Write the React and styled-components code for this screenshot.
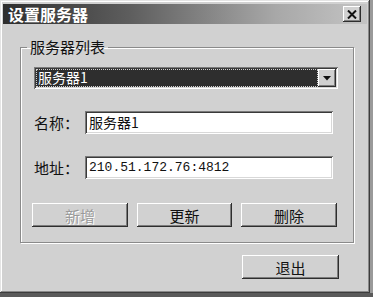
import React from 'react';
import styled, { createGlobalStyle } from 'styled-components';

const GlobalStyle = createGlobalStyle`
  html, body {
    margin: 0;
    padding: 0;
    background: #5a5a5a;
  }
  body {
    font-family: "Noto Sans CJK SC", "Liberation Sans", sans-serif;
  }
`;

const Window = styled.div`
  width: 370px;
  height: 293px;
  box-sizing: border-box;
  padding: 3px;
  background: #d1d1d1;
  box-shadow: inset -1px -1px #3c3c3c, inset 1px 1px #e4e4e4,
    inset -2px -2px #8a8a8a, inset 2px 2px #ffffff, 3px 0 #9a9a9a;
`;

const TitleBar = styled.div`
  height: 20px;
  margin-top: 1px;
  display: flex;
  align-items: center;
  justify-content: space-between;
  padding: 0 5px 0 5px;
  background: linear-gradient(90deg, #2e2e2e 0%, #5e5e5e 35%, #a8a8a8 75%, #c4c4c4 100%);
`;

const Title = styled.span`
  color: #fff;
  font-weight: bold;
  font-size: 16px;
  line-height: 20px;
`;

const CloseButton = styled.div`
  width: 18px;
  height: 16px;
  box-sizing: border-box;
  background: #d1d1d1;
  box-shadow: inset -1px -1px #2e2e2e, inset 1px 1px #ffffff, inset -2px -2px #808080;
  display: flex;
  align-items: center;
  justify-content: center;
  margin-right: 1px;
  svg { display: block; }
`;

const Group = styled.fieldset`
  margin: 13px 0 0 17px;
  width: 334px;
  height: 206px;
  box-sizing: border-box;
  padding: 10px 0 0 13px;
  border: 1px solid #8a8a8a;
  box-shadow: 1px 1px #fff, inset 1px 1px #fff;
  display: flex;
  flex-direction: column;
`;

const Legend = styled.legend`
  font-size: 15px;
  line-height: 20px;
  padding: 0 3px;
  margin-left: -7px;
  color: #111;
`;

const Sunken = styled.div`
  box-sizing: border-box;
  padding: 2px;
  box-shadow: inset 1px 1px #7a7a7a, inset -1px -1px #ffffff,
    inset 2px 2px #3a3a3a, inset -2px -2px #d8d8d8;
`;

const Combo = styled(Sunken)`
  width: 304px;
  height: 22px;
  display: flex;
  background: #fff;
`;

const ComboValue = styled.div`
  flex: 1;
  background: #2e2e2e;
  color: #fff;
  font-size: 14px;
  line-height: 16px;
  padding-left: 2px;
  outline: 1px dotted #d0d0d0;
  outline-offset: -1px;
`;

const ArrowButton = styled.div`
  width: 18px;
  background: #d1d1d1;
  box-shadow: inset -1px -1px #2e2e2e, inset 1px 1px #ffffff, inset -2px -2px #808080;
  display: flex;
  align-items: center;
  justify-content: center;
`;

const Row = styled.div`
  display: flex;
  align-items: center;
  margin-top: ${p => p.$gap}px;
`;

const Label = styled.div`
  width: 51px;
  font-size: 15px;
  color: #111;
`;

const TextInput = styled(Sunken)`
  width: 248px;
  height: 23px;
  background: #fff;
  color: #111;
  font-size: ${p => (p.$mono ? 13 : 14)}px;
  font-family: ${p => (p.$mono ? '"Liberation Mono", "DejaVu Sans Mono", monospace' : '"Noto Sans CJK SC", sans-serif')};
  line-height: 19px;
  padding-left: 4px;
`;

const ButtonRow = styled.div`
  display: flex;
  gap: 9px;
  margin: 24px 0 0 -2px;
`;

const Button = styled.div`
  width: ${p => p.$w || 96}px;
  height: 24px;
  box-sizing: border-box;
  background: #d1d1d1;
  box-shadow: inset -1px -1px #2e2e2e, inset 1px 1px #ffffff, inset -2px -2px #7c7c7c;
  display: flex;
  align-items: center;
  justify-content: center;
  font-size: 15px;
  color: ${p => (p.$disabled ? '#9a9a9a' : '#111')};
  text-shadow: ${p => (p.$disabled ? '1px 1px #fff' : 'none')};
`;

const Footer = styled.div`
  display: flex;
  padding-left: 239px;
  margin-top: 12px;
`;

export default function App() {
  return (
    <>
      <GlobalStyle />
      <Window>
        <TitleBar>
          <Title>设置服务器</Title>
          <CloseButton>
            <svg width="10" height="9" viewBox="0 0 10 9">
              <path d="M1 0.5 L9 8.5 M9 0.5 L1 8.5" stroke="#111" strokeWidth="2" />
            </svg>
          </CloseButton>
        </TitleBar>
        <Group>
          <Legend>服务器列表</Legend>
          <Combo>
            <ComboValue>服务器1</ComboValue>
            <ArrowButton>
              <svg width="8" height="5" viewBox="0 0 8 5">
                <path d="M0 0 H8 L4 4.5 Z" fill="#111" />
              </svg>
            </ArrowButton>
          </Combo>
          <Row $gap={22}>
            <Label>名称：</Label>
            <TextInput>服务器1</TextInput>
          </Row>
          <Row $gap={22}>
            <Label>地址：</Label>
            <TextInput $mono>210.51.172.76:4812</TextInput>
          </Row>
          <ButtonRow>
            <Button $disabled>新增</Button>
            <Button $w={95}>更新</Button>
            <Button>删除</Button>
          </ButtonRow>
        </Group>
        <Footer>
          <Button $w={97}>退出</Button>
        </Footer>
      </Window>
    </>
  );
}
